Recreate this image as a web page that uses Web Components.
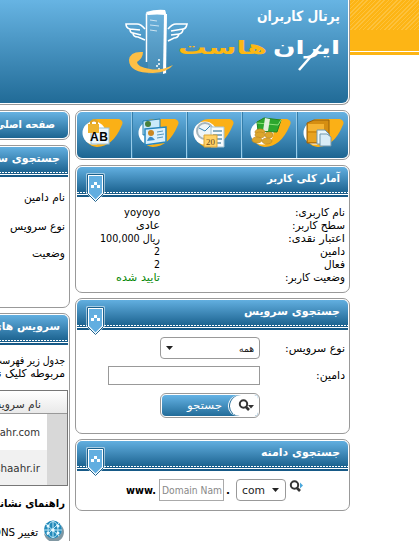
<!DOCTYPE html>
<html lang="fa"><head><meta charset="utf-8"><title>پرتال کاربران</title>
<style>html,body{margin:0;width:419px;height:541px;overflow:hidden;background:#fff}body{font:11px/13px "DejaVu Sans",sans-serif;color:#000}</style></head><body>
<portal-page></portal-page>
<script>
const define=(name,html,ready)=>customElements.define(name,class extends HTMLElement{
  connectedCallback(){if(this.shadowRoot)return;this.attachShadow({mode:'open'}).innerHTML=html;if(ready)ready.call(this,this.shadowRoot)}
});
/* One line of text, condensed or stretched to the width in "w". */
define('fit-label',`<style>:host{display:block;direction:ltr;flex:none;line-height:13px;height:13px;white-space:nowrap}span{display:inline-block;transform-origin:0 50%}</style><span dir="rtl"><slot></slot></span>`,function(r){
  const s=r.querySelector('span'),w=+this.getAttribute('w');this.style.width=w+'px';
  if(this.hasAttribute('size'))s.style.fontSize=this.getAttribute('size')+'px';
  const n=s.getBoundingClientRect().width;s.style.transform='scaleX('+w/n+')';
});
define('panel-badge',`<style>:host{display:block;width:20px;height:30px}svg{display:block}</style>
<svg width="20" height="30"><path d="M.5.5h18v20l-9 9-9-9z" fill="#fff"/><path d="M1.5 1.5h16v19l-8 8-8-8z" fill="#fff" stroke="#1b618d"/><path d="M3 3h13v17l-6.500 6.500L3 20z" fill="#62aee0"/><path d="M8 9h3v3H8zM5 12h3v3H5zM11 12h3v3h-3z" fill="#fff"/></svg>`);
define('side-panel',`<style>:host{display:block;box-sizing:border-box;border:1px solid #999;border-radius:7px;padding:1px;background:#fff;position:relative}
.h{height:25px;border-radius:5px 5px 0 0;background:linear-gradient(#62afe0,#1d6491);display:flex;direction:rtl;box-sizing:border-box;padding:5px 8px 0;color:#fff;font-weight:bold;overflow:hidden}
.d{height:2px;background:repeating-linear-gradient(90deg,#fff 0 2px,#1d6491 2px 3px) 0 0/100% 1px no-repeat #175c89}
.l{height:2px;border-top:1px solid #fff;background:#175a87}
panel-badge{position:absolute;left:10px;top:7px}:host([plain]) panel-badge{display:none}</style>
<div class="h"><slot name="title"></slot></div><div class="d"></div><div class="l"></div><panel-badge></panel-badge><slot></slot>`);
define('stat-row',`<style>:host{display:flex;direction:rtl;height:13px;padding:0 3px 0 0}.k{width:185px;display:flex;flex:none}</style><div class="k"><slot name="k"></slot></div><slot></slot>`);
define('search-glyph',`<style>:host{display:block;flex:none}svg{display:block}</style><svg width="16" height="15"><circle cx="5.500" cy="5" r="3.700" fill="none" stroke="#333" stroke-width="2"/><path d="M8 8l3 3" stroke="#333" stroke-width="2.600"/><path class="a"/></svg>`,function(r){
  const a=r.querySelector('.a');if(this.hasAttribute('blue')){a.setAttribute('d','M11 2.500l3 3-3 3z');a.setAttribute('fill','#4ba8dc')}else{a.setAttribute('d','M10 6h6l-3 3.500z');a.setAttribute('fill','#333')}
});
define('pick-box',`<style>:host{display:flex;direction:ltr;box-sizing:border-box;border:1px solid #999;border-radius:4px;align-items:center;justify-content:space-between;background:#fff;padding:0 5px;color:#222}</style><slot></slot>`);
define('brand-header',`<style>:host{display:block;height:105px;overflow:hidden;position:relative}
.row{display:flex}.blue{box-sizing:border-box;width:350px;height:105px;border:solid #999;border-width:0 1px 1px 0;border-radius:0 0 8px 0;padding:0 1px 1px 0;background:#fff;flex:none}
.in{box-sizing:border-box;height:103px;border-radius:0 0 6px 0;background:linear-gradient(#67b4e3,#216b97);display:flex;justify-content:flex-end;padding:9px 8px 0 0}
.mark{overflow:visible;flex:none}.words{width:163px;color:#fff}.p{display:flex;justify-content:flex-end}.n{display:flex;direction:rtl;gap:6px;margin-top:18px;font-weight:bold;position:relative}.n .o{color:#fdb813}
.n svg{position:absolute;left:120px;top:2px}
.or{height:51px;background:repeating-linear-gradient(135deg,#ffffff2c 0 1px,transparent 1px 3px) 0 0/100% 30px no-repeat,#fdb515}.ln{border-top:1px solid #fff;height:3px;background:#fdb515}.side{flex:1}</style>
<div class="row"><div class="blue"><div class="in">
<svg class="mark" width="52" height="66" viewBox="125 9 52 66" fill="none"><path d="M147 13q9-3 18-1l2 62h-19z" fill="#ffffff16"/><path d="M146.500 62V14q9-2 18-3l1 4-1 58" stroke="#fff" stroke-width="1.500"/><path d="M146 12q10-3 19-2l1 5q-9-1-18 0z" fill="#fff"/><path d="M164 14l-1 60 3-1 1-59z" fill="#fff"/><path d="M150 20l7 1M150 25l9 1M150 30l7 1" stroke="#ffffffaa"/><path d="M145 29q-4-5-8-5h-11q0 4 4 5 0 4 3 4 0 4 5 4l7 3M130 29l10 1M133 33l8 2M168 29q4-5 8-5h11q-1 5-4 5 0 4-4 5-1 4-5 4l-6 3M171 31l12-2M171 35l8-1" stroke="#fff" stroke-width="1.600"/><path d="M159 59v2M159 63v2M157 65v2M159 68v2" stroke="#fff" stroke-width="1.500"/><path d="M143 60q-13-1-14 8 0 13 24 13 15-1 20-8-12 6-23 4-13-2-13-7 6-4 6-10z" transform="translate(0 -8)" fill="#fdbf45"/></svg>
<div class="words"><div class="p"><fit-label w="83" size="14" style="font-weight:600;padding-top:1px">پرتال کاربران</fit-label></div>
<div class="n"><fit-label w="67" size="19">ایران</fit-label><fit-label class="o" w="89" size="19">هاست</fit-label><svg width="26" height="30"><path d="M24 2L2 27" stroke="#fff" stroke-width="2.500"/></svg></div></div>
</div></div><div class="side"><div class="or"></div><div class="ln"></div></div></div>`);
const drop='<path d="M20 2H40q6 2 2 8Q34 29 18 30A14 14 0 1 1 20 2z" fill="#fbb016"/><circle cx="15" cy="16" r="11.500" fill="#fff"/>';
const arts={
lock:'<rect x="12" y="11" width="18" height="16" fill="#edf6fc" stroke="#9abfd6"/><path d="M12 8V5q3-4 6 0v4" fill="none" stroke="#dda326" stroke-width="2"/><rect x="9" y="7" width="11" height="9" fill="#efb42d"/><text x="11" y="24" font-family="Liberation Sans" font-weight="bold" font-size="12" textLength="18">AB</text>',
cards:'<path d="M8 4l17-2v14L8 18z" fill="#c9e9fa" stroke="#217eaf"/><circle cx="13" cy="7" r="3" fill="#48803b"/><path d="M10 12l21-2v15l-21 3z" fill="#d9f0fd" stroke="#2686bf" stroke-width="1.500"/><circle cx="16" cy="16" r="3" fill="#c98723"/><path d="M12 24q3-8 8-1z" fill="#368aca"/><path d="M22 15l6-1M22 18l7-1M22 21l6-1" stroke="#5799bd"/>',
gauge:'<circle cx="15" cy="14" r="8" fill="#eef5f8" stroke="#a6b5bc" stroke-width="2"/><path d="M9 11l6 3 5-5" stroke="#3785b5" fill="none"/><path d="M21 10h13v20H21z" fill="#f6fbfd" stroke="#a4c3d2"/><path d="M23 14h9M23 18h9M23 22h9M23 26h8" stroke="#87aec2" stroke-width="2"/><path d="M14 18h13v12H14z" fill="#ffd268" stroke="#dba435"/><text x="16" y="28" font-family="Liberation Serif" font-size="9" fill="#684819">20</text>',
money:'<path d="M10 5l7-4 17 2-4 12-19-1z" fill="#2da72e" stroke="#208422"/><path d="M10 6l21 2 3-5" stroke="#8be278" fill="none"/><path d="M18 1l5 1-2 12h-5z" fill="#e2efdf"/><g fill="#dda62c" stroke="#c08a20" stroke-width=".7"><ellipse cx="13" cy="15" rx="5" ry="3"/><ellipse cx="13" cy="18" rx="5" ry="3"/><ellipse cx="10" cy="23" rx="5" ry="3"/><ellipse cx="20" cy="24" rx="5" ry="3"/><ellipse cx="22" cy="18" rx="4" ry="3"/></g>',
file:'<path d="M7 6l7-3h15v20l-4 3H7z" fill="#d58e12" stroke="#97600b"/><path d="M8 7h16v7H8z" fill="#f6b432"/><path d="M8 16h9v9H8z" fill="#e9a321"/><path d="M17 13h8l4 4v10H17z" fill="#eaf6fb" stroke="#7297ab"/><path d="M20 17h7l4 3v9H20z" fill="#d9ecf7" stroke="#7297ab"/>'};
define('tool-icon',`<style>:host{display:block;width:46px;height:33px;flex:none}svg{display:block;overflow:visible}</style><svg width="46" height="33"></svg>`,function(r){r.querySelector('svg').innerHTML=drop+arts[this.getAttribute('kind')]});
define('icon-bar',`<style>:host{display:block;box-sizing:border-box;height:50px;border:1px solid #999;border-radius:7px;padding:1px}.b{height:46px;border-radius:5px;background:linear-gradient(#66b2e2,#1d6591);display:grid;grid-template-columns:54px 55px 55px 55px 1fr}.c{padding:5px 0 0 3px;border-left:1px solid #97cbe9;box-shadow:inset 1px 0 #347eaa}.c:first-child{border:0;box-shadow:none;padding-left:2px}.c:nth-child(4){padding-left:5px}</style><div class="b">${Object.keys(arts).map(k=>`<div class="c"><tool-icon kind="${k}"></tool-icon></div>`).join('')}</div>`);
define('search-button',`<style>:host{display:block;box-sizing:border-box;width:100px;height:25px;border:1px solid #999;border-radius:6px;padding:1px;background:#fff}.b{height:21px;border-radius:4px;background:linear-gradient(#65b3e5,#226c99);display:flex;direction:ltr;justify-content:flex-end;color:#fff;overflow:hidden}.q{flex:none;width:28px;margin-left:8px;background:#fff;box-shadow:-1px 0 #226c99,-2px 0 #fff;border-radius:14px 4px 4px 12px;display:flex;padding:4px 0 0 8px;box-sizing:border-box}</style><div class="b"><fit-label w="35" style="margin-top:4px">جستجو</fit-label><div class="q"><search-glyph></search-glyph></div></div>`);
define('globe-icon',`<style>:host{display:block;flex:none}svg{display:block}</style><svg width="21" height="21"><path d="M1 13a10 10 0 1 0 17-8q3 12-8 13-5 0-9-5z" fill="#8198a3"/><circle cx="10" cy="9.500" r="9" fill="#2289b9"/><g stroke="#bce7f7" fill="none"><path d="M3 4l13 12M16 3L4 15M10 1v17M1 10h18"/><ellipse cx="10" cy="9.500" rx="5" ry="8"/></g><g fill="#eafaff"><circle cx="10" cy="10" r="1.700"/><circle cx="5" cy="6" r="1.500"/><circle cx="15" cy="6" r="1.500"/><circle cx="5" cy="13" r="1.500"/><circle cx="15" cy="13" r="1.500"/></g></svg>`);
define('left-column',`<style>:host{display:flex;flex-direction:column;gap:5px;width:70px;height:431px;overflow:hidden}side-panel,.menu{width:100px;margin-left:-30px;flex:none;box-sizing:border-box}
.menu{height:30px;border:1px solid #999;border-radius:7px;padding:1px}.menu div{height:26px;border-radius:5px;background:linear-gradient(#66b2e2,#1d6591);direction:rtl;display:flex;padding:6px 13px 0;box-sizing:border-box;color:#fff;font-weight:bold}
.f{direction:rtl;display:flex;flex-direction:column;padding:14px 3px 0}.f fit-label+fit-label{margin-top:14px}
.t{border:1px solid #777;margin:10px 0 0;direction:rtl}.th{height:23px;background:linear-gradient(#fff,#e9e9e9);border-bottom:1px solid #999;padding:7px 26px 0 0;box-sizing:border-box}.tr{display:flex;height:36px}.g{width:20px;background:#d8d8d8;flex:none}.v{flex:1;padding:12px 7px 0 0}.tr+.tr .v{background:#f1f1f1}.c{color:#333}</style>
<div class="menu"><div><fit-label w="60">صفحه اصلی</fit-label></div></div>
<side-panel plain style="height:163px"><fit-label slot="title" w="96">جستجوی سرویس</fit-label><div class="f"><fit-label w="41">نام دامین</fit-label><fit-label w="55" style="margin-top:16px">نوع سرویس</fit-label><fit-label w="33">وضعیت</fit-label></div></side-panel>
<side-panel plain style="height:250px"><fit-label slot="title" w="68">سرویس های</fit-label>
<div class="f" style="padding-top:9px"><fit-label w="72">جدول زیر فهرست</fit-label><fit-label w="88" style="margin:0">مربوطه کلیک نمایید</fit-label></div>
<div class="t"><div class="th"><fit-label class="c" w="53">نام سرویس</fit-label></div><div class="tr"><div class="g"></div><div class="v"><fit-label class="c" w="58">shaahr.com</fit-label></div></div><div class="tr" style="height:35px"><div class="g"></div><div class="v"><fit-label class="c" w="45">shaahr.ir</fit-label></div></div></div>
<div class="f" style="padding-top:11px;font-weight:bold"><fit-label w="85">راهنمای نشانه ها</fit-label></div>
<div style="display:flex;direction:rtl;gap:5px;padding:10px 4px 0"><globe-icon></globe-icon><fit-label w="45" style="padding-top:6px">تغییر DNS</fit-label></div></side-panel>`);
define('main-column',`<style>:host{display:flex;flex-direction:column;width:275px;gap:5px}.s{padding-top:9px}.r{display:flex;direction:rtl;align-items:center;padding-right:3px}.k{width:85px;flex:none;display:flex}.i{box-sizing:border-box;border:1px solid #999}.d{display:flex;align-items:center;padding:8px 0 0 49px}</style>
<icon-bar></icon-bar>
<side-panel style="height:128px"><fit-label slot="title" w="73">آمار کلی کاربر</fit-label><div class="s">
<stat-row><fit-label slot="k" w="50">نام کاربری:</fit-label><fit-label w="36">yoyoyo</fit-label></stat-row>
<stat-row><fit-label slot="k" w="53">سطح کاربر:</fit-label><fit-label w="24">عادی</fit-label></stat-row>
<stat-row><fit-label slot="k" w="57">اعتبار نقدی:</fit-label><fit-label w="60">ریال 100,000</fit-label></stat-row>
<stat-row><fit-label slot="k" w="25">دامین</fit-label><fit-label w="6">2</fit-label></stat-row>
<stat-row><fit-label slot="k" w="21">فعال</fit-label><fit-label w="6">2</fit-label></stat-row>
<stat-row><fit-label slot="k" w="60">وضعیت کاربر:</fit-label><fit-label w="44" style="color:#088808">تایید شده</fit-label></stat-row></div></side-panel>
<side-panel style="height:136px"><fit-label slot="title" w="96">جستجوی سرویس</fit-label>
<div class="r" style="padding-top:7px"><div class="k"><fit-label w="60">نوع سرویس:</fit-label></div><pick-box style="width:100px;height:22px"><svg width="8" height="5"><path d="M0 0h7L3.500 4z" fill="#222"/></svg><fit-label w="15" size="10">همه</fit-label></pick-box></div>
<div class="r" style="padding-top:7px"><div class="k"><fit-label w="29">دامین:</fit-label></div><div class="i" style="width:152px;height:19px"></div></div>
<div class="r" style="padding-top:8px"><div class="k"></div><search-button></search-button></div></side-panel>
<side-panel style="height:72px"><fit-label slot="title" w="79">جستجوی دامنه</fit-label>
<div class="d"><fit-label w="30" style="font-weight:bold">www.&lrm;</fit-label><div class="i" style="width:65px;height:22px;margin-left:3px;padding:4px 2px;color:#888;border-color:#aaa;display:flex"><fit-label w="60">Domain Nam</fit-label></div><fit-label w="4" style="margin:0 6px 0 2px;font-weight:bold">.</fit-label><pick-box style="width:50px;height:22px"><fit-label w="23">com</fit-label><svg width="8" height="5"><path d="M0 0h7L3.500 4z" fill="#222"/></svg></pick-box><search-glyph blue style="margin:-5px 0 0 3px"></search-glyph></div></side-panel>`);
define('portal-page',`<style>:host{display:block;width:419px;height:541px;overflow:hidden}main{display:flex;gap:5px;padding-top:5px}</style><brand-header></brand-header><main><left-column></left-column><main-column></main-column></main>`);
</script></body></html>
